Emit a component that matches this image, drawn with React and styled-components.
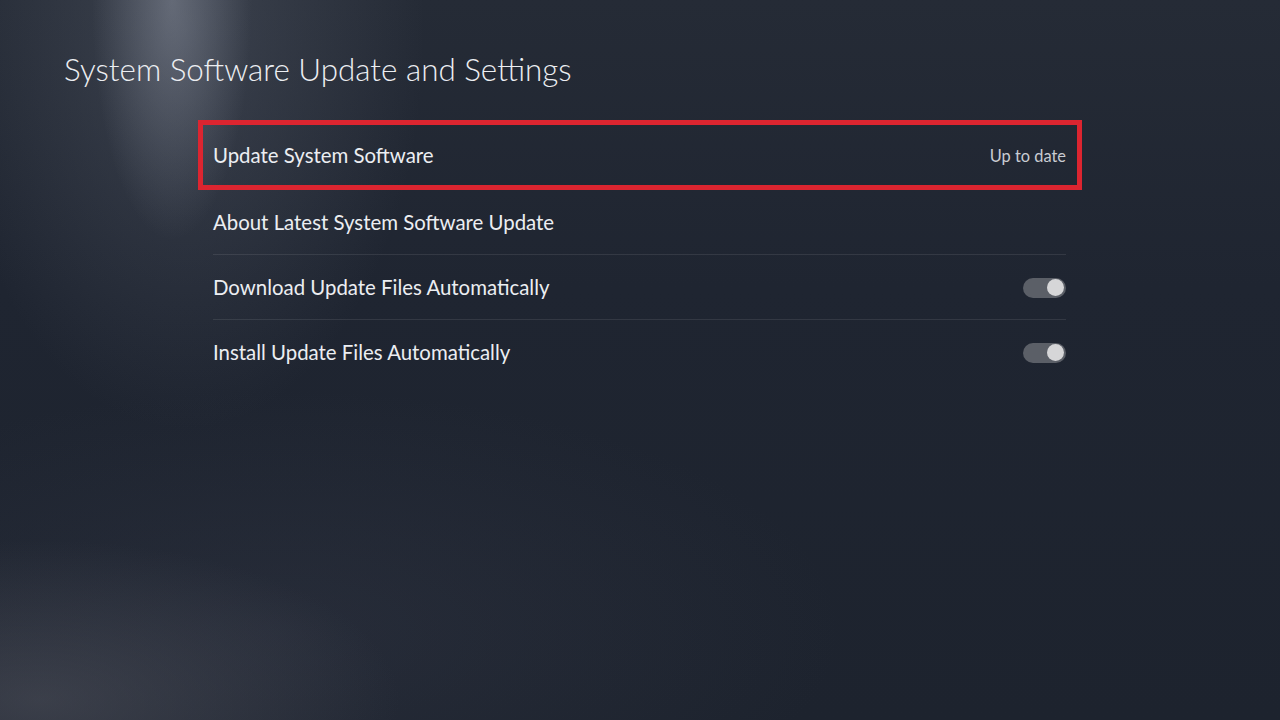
import React from 'react';
import styled, { createGlobalStyle } from 'styled-components';

const GlobalStyle = createGlobalStyle`
  html, body { margin: 0; padding: 0; }
  body {
    width: 1280px;
    height: 720px;
    overflow: hidden;
    font-family: Lato, "Open Sans", "Liberation Sans", sans-serif;
    background: #1e2430;
  }
`;

const Screen = styled.div`
  width: 1280px;
  height: 720px;
  box-sizing: border-box;
  padding: 49px 0 0 64px;
  color: #eceef2;
  background:
    radial-gradient(ellipse 80px 240px at 172px 0px, rgba(150,156,170,0.45), rgba(150,156,170,0) 100%),
    radial-gradient(ellipse 240px 400px at 185px 30px, rgba(110,116,130,0.32), rgba(110,116,130,0) 100%),
    radial-gradient(ellipse 360px 160px at 40px 700px, rgba(90,92,102,0.45), rgba(90,92,102,0) 100%),
    radial-gradient(ellipse 560px 240px at 280px 630px, rgba(60,64,80,0.3), rgba(60,64,80,0) 100%),
    linear-gradient(180deg, #252b36 0%, #1f2531 40%, #1d232e 100%);
`;

const Title = styled.h1`
  margin: 0;
  font-weight: 300;
  font-size: 31.4px;
  line-height: 40px;
`;

const List = styled.div`
  width: 884px;
  margin: 31px 0 0 134px;
  display: flex;
  flex-direction: column;
`;

const Row = styled.div`
  box-sizing: border-box;
  height: ${p => (p.$focused ? 70 : 65)}px;
  padding: ${p => (p.$focused ? '0 11px 0 10px' : '0 16px 0 15px')};
  border: ${p => (p.$focused ? '5px solid #dc2530' : 'none')};
  display: flex;
`;

const RowInner = styled.div`
  flex: 1;
  display: flex;
  align-items: center;
  justify-content: space-between;
  border-top: 1px solid ${p => (p.$divider ? 'rgba(255,255,255,0.09)' : 'transparent')};
  margin-top: ${p => (p.$divider ? -1 : 0)}px;
`;

const Label = styled.span`
  font-size: 20.4px;
  font-weight: 400;
  color: #eceef2;
  padding-bottom: 2px;
`;

const Value = styled.span`
  font-size: 16.4px;
  color: #c9ccd2;
  padding-bottom: 1px;
`;

const Track = styled.div`
  width: 43px;
  height: 20px;
  border-radius: 10px;
  background: #5b5f67;
  display: flex;
  align-items: center;
  justify-content: ${p => (p.$on ? 'flex-end' : 'flex-start')};
  padding: 0 2px;
  box-sizing: border-box;
`;

const Knob = styled.div`
  width: 17px;
  height: 17px;
  border-radius: 50%;
  background: #d6d6d8;
`;

const items = [
  { label: 'Update System Software', value: 'Up to date', focused: true },
  { label: 'About Latest System Software Update' },
  { label: 'Download Update Files Automatically', toggle: true, divider: true },
  { label: 'Install Update Files Automatically', toggle: true, divider: true },
];

export default function App() {
  return (
    <Screen>
      <GlobalStyle />
      <Title>System Software Update and Settings</Title>
      <List>
        {items.map(item => (
          <Row key={item.label} $focused={item.focused}>
            <RowInner $divider={item.divider}>
              <Label>{item.label}</Label>
              {item.value && <Value>{item.value}</Value>}
              {item.toggle && (
                <Track $on>
                  <Knob />
                </Track>
              )}
            </RowInner>
          </Row>
        ))}
      </List>
    </Screen>
  );
}
